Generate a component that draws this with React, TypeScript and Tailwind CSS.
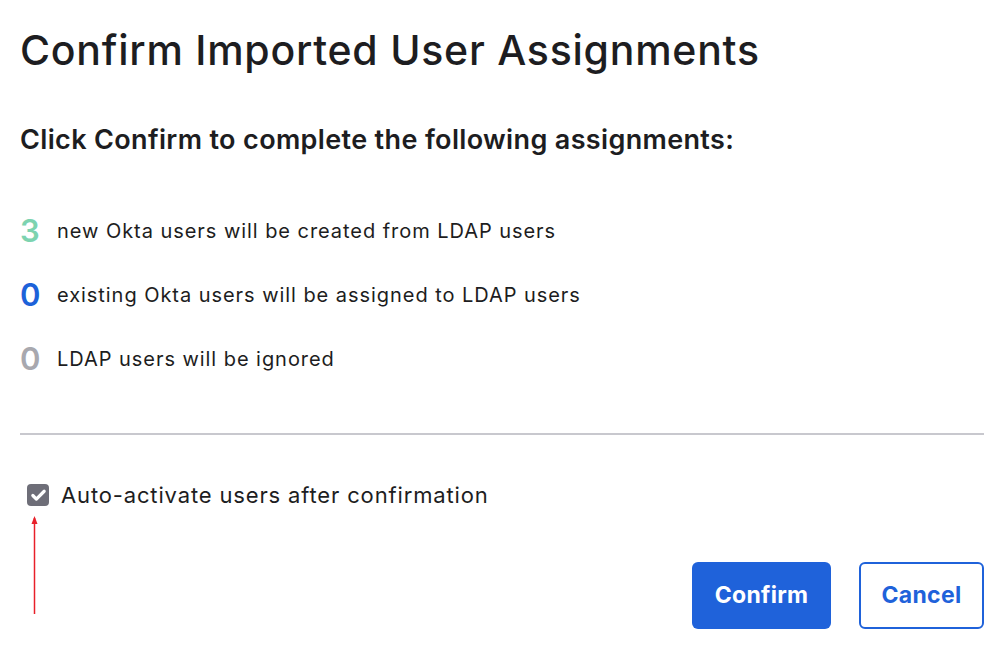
import { Check } from "lucide-react";

const rows = [
  { n: "3", color: "text-[#7dd3b0]", text: "new Okta users will be created from LDAP users" },
  { n: "0", color: "text-[#1d62d9]", text: "existing Okta users will be assigned to LDAP users" },
  { n: "0", color: "text-[#a8a8ae]", text: "LDAP users will be ignored" },
];

export default function App() {
  return (
    <div className="w-[1000px] h-[650px] bg-white text-[#1d1d21] font-['Inter',sans-serif] px-5 pt-[24px] overflow-hidden">
      <h1 className="text-[41px] leading-[52px] font-medium tracking-[0.75px]">Confirm Imported User Assignments</h1>

      <h2 className="mt-[48px] text-[27px] leading-[32px] font-semibold tracking-[0.35px]">Click Confirm to complete the following assignments:</h2>

      <div className="mt-[55px] flex flex-col gap-[24px]">
        {rows.map((r, i) => (
          <div key={i} className="flex items-center h-[40px]">
            <span className={`text-[31px] font-semibold w-[37px] ${r.color}`}>{r.n}</span>
            <span className="text-[20px] tracking-[0.95px]">{r.text}</span>
          </div>
        ))}
      </div>

      <div className="mt-[54px] h-[2px] w-[964px] bg-[#c8c8ce]" />

      <div className="relative mt-[45px] flex items-center h-[30px] gap-3 pl-[7px]">
        <div className="w-[22px] h-[22px] rounded-[4px] bg-[#6e6e78] flex items-center justify-center">
          <Check size={17} strokeWidth={4.5} className="text-white" />
        </div>
        <span className="text-[22px] tracking-[0.85px]">Auto-activate users after confirmation</span>
        <svg className="absolute left-[10px] top-[34px]" width="10" height="102" viewBox="0 0 10 102">
          <line x1="4.5" y1="4" x2="4.5" y2="100" stroke="#e8202a" strokeWidth="1.5" />
          <path d="M1.5 10 L4.5 2 L7.5 10 Z" fill="#e8202a" />
        </svg>
      </div>

      <div className="mt-[52px] -mr-1 flex justify-end gap-7">
        <button className="w-[139px] h-[67px] rounded-[6px] bg-[#1f62da] text-white text-[23px] font-bold tracking-[0.3px]">Confirm</button>
        <button className="w-[125px] h-[67px] rounded-[6px] border-2 border-[#1f62da] bg-white text-[#1f62da] text-[23px] font-bold tracking-[0.3px]">Cancel</button>
      </div>
    </div>
  );
}
